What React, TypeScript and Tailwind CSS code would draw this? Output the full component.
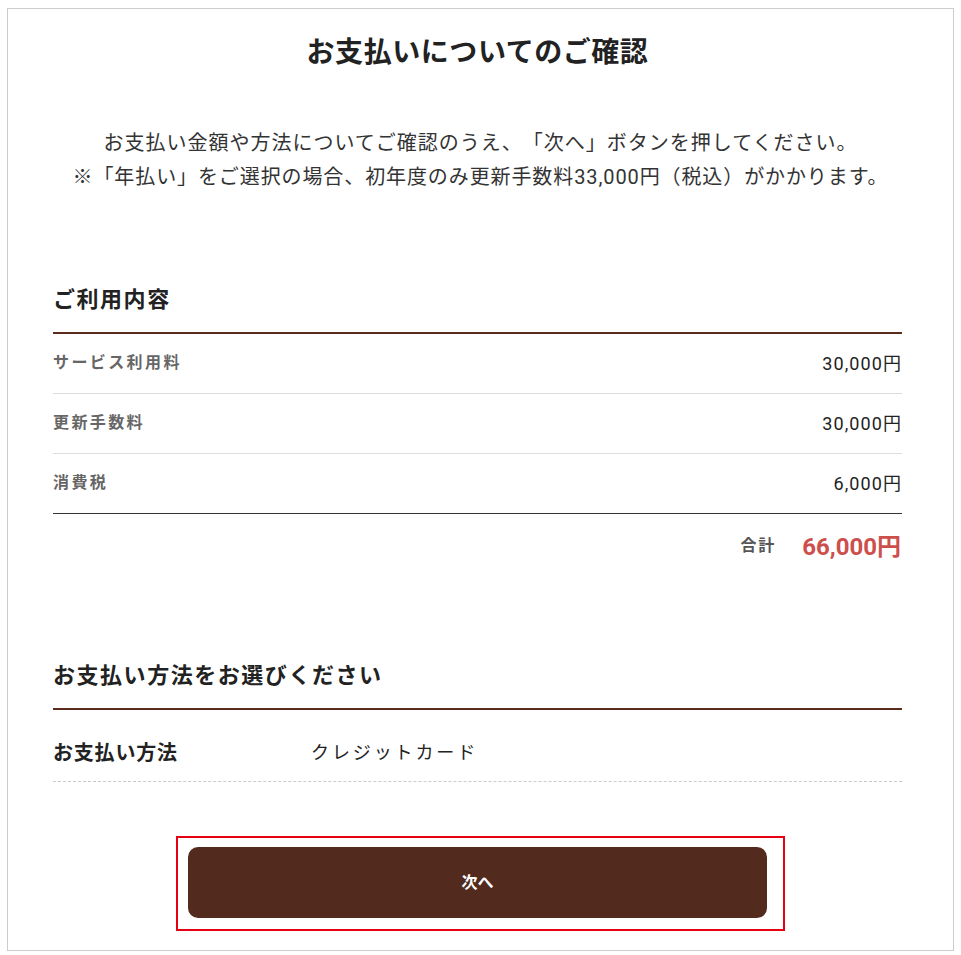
const font = { fontFamily: 'Roboto, "Noto Sans CJK JP", sans-serif' }

const fees = [
  { label: 'サービス利用料', value: '30,000円' },
  { label: '更新手数料', value: '30,000円' },
  { label: '消費税', value: '6,000円' },
]

export default function App() {
  return (
    <div className="bg-white min-h-[955px] pt-[8px] pl-[7px] [text-spacing-trim:space-all]" style={font}>
      <div className="w-[947px] h-[943px] border border-[#cccccc] pl-[45px] pr-[51px] pt-[23px]">
        <h1 className="text-center text-[28px] leading-[42px] font-bold tracking-[0.02em] text-[#222]">お支払いについてのご確認</h1>

        <p className="mt-[52px] text-center text-[20px] leading-[34px] tracking-[0.05em] text-[#333] pl-[6px]">
          お支払い金額や方法についてご確認のうえ、「次へ」ボタンを押してください。
          <br />
          <span className="tracking-[0.045em]">※「年払い」をご選択の場合、初年度のみ更新手数料33,000円（税込）がかかります。</span>
        </p>

        {/* ご利用内容 */}
        <h2 className="mt-[90px] pb-[16px] border-b-2 border-[#5a2d1e] text-[22px] leading-[32px] font-bold tracking-[0.07em] text-[#222]">
          ご利用内容
        </h2>
        <div className="border-b border-[#333]">
          {fees.map((f, i) => (
            <div
              key={f.label}
              className={
                'h-[59px] flex items-center justify-between ' +
                (i < fees.length - 1 ? 'border-b border-[#dddddd] box-content' : '')
              }
            >
              <span className="text-[16px] font-bold tracking-[0.15em] text-[#666] -mt-[2px]">{f.label}</span>
              <span className="text-[18px] tracking-[0.06em] text-[#222]">{f.value}</span>
            </div>
          ))}
        </div>
        <div className="h-[66px] flex items-center justify-end pr-[1px]">
          <span className="text-[16px] font-bold tracking-[0.12em] text-[#555] -mt-[3px]">合計</span>
          <span className="ml-[26px] text-[24px] font-bold text-[#cd4f4c]">66,000円</span>
        </div>

        {/* お支払い方法 */}
        <h2 className="mt-[80px] pb-[16px] border-b-2 border-[#5a2d1e] text-[22px] leading-[32px] font-bold tracking-[0.07em] text-[#222]">
          お支払い方法をお選びください
        </h2>
        <div className="flex pt-[28px] pb-[13px] border-b border-dashed border-[#c5cdd2] leading-[30px]">
          <span className="w-[258px] text-[20px] font-bold tracking-[0.04em] text-[#222]">お支払い方法</span>
          <span className="text-[18px] tracking-[0.16em] text-[#222]">クレジットカード</span>
        </div>

        <div className="mt-[54px] flex justify-center pl-[6px]">
          <div className="w-[609px] border-2 border-[#e60012] pl-[10px] pr-[16px] pt-[9px] pb-[11px]">
            <button className="w-full h-[71px] rounded-[10px] bg-[#532a1e] text-white text-[16px] font-bold">
              次へ
            </button>
          </div>
        </div>
      </div>
    </div>
  )
}
